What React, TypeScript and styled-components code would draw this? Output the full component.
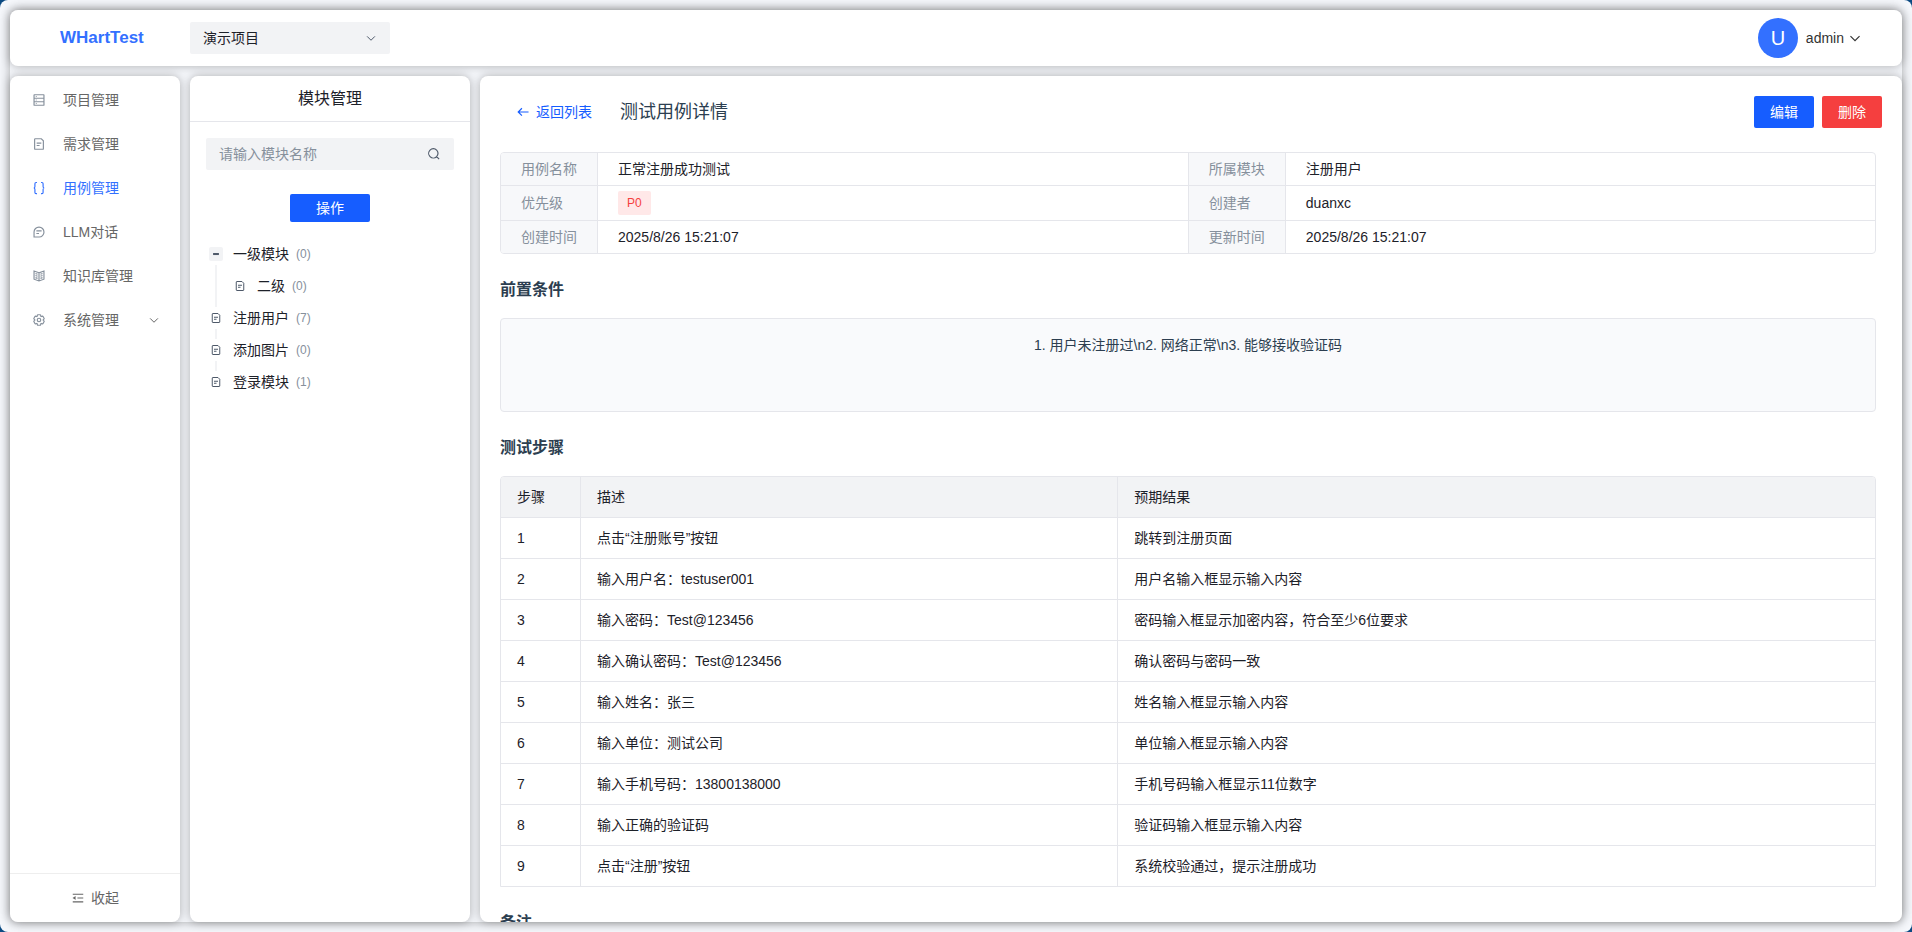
import React, { useState } from 'react';
import styled, { createGlobalStyle, css } from 'styled-components';

const GlobalStyle = createGlobalStyle`
  *, *::before, *::after { box-sizing: border-box; }
  body {
    margin: 0;
    background: #0b4a82;
    font-family: 'Liberation Sans', 'Noto Sans CJK SC', sans-serif;
    font-size: 14px;
    line-height: 22px;
    color: #1d2129;
  }
  button, input, select { font: inherit; color: inherit; }
  h1, h2, h3, p, ul { margin: 0; padding: 0; }
  ul { list-style: none; }
`;

/* ---------- icons ---------- */

const paths = {
  storage:
    'M7 18h34v12H7V18ZM40 6H8a1 1 0 0 0-1 1v11h34V7a1 1 0 0 0-1-1ZM7 30h34v11a1 1 0 0 1-1 1H8a1 1 0 0 1-1-1V30ZM13 12h3M13 24h3M13 36h3',
  file: 'M16 21h16m-16 8h10m11 13H11a2 2 0 0 1-2-2V8a2 2 0 0 1 2-2h21l7 7v27a2 2 0 0 1-2 2Z',
  braces:
    'M17 5h-3a4 4 0 0 0-4 4v10c0 2-2 5-4 5 2 0 4 3 4 5v10a4 4 0 0 0 4 4h3M31 5h3a4 4 0 0 1 4 4v10c0 2 2 5 4 5-2 0-4 3-4 5v10a4 4 0 0 1-4 4h-3',
  message: 'M15 20h18m-18 9h9M7 41h17.63C33.67 41 41 33.67 41 24.63V24c0-9.389-7.611-17-17-17S7 14.611 7 24v17Z',
  book: 'M24 13 7 7v28l17 6 17-6V7l-17 6Zm0 0v27.5M29 18l7-2.5M29 25l7-2.5M29 32l7-2.5M19 18l-7-2.5m7 9.5-7-2.5m7 9.5-7-2.5',
  settings:
    'M18.797 6.732A1 1 0 0 1 19.76 6h8.48a1 1 0 0 1 .964.732l1.285 4.628a1 1 0 0 0 1.213.7l4.651-1.2a1 1 0 0 1 1.116.468l4.24 7.344a1 1 0 0 1-.153 1.2L38.193 23.3a1 1 0 0 0 0 1.402l3.364 3.427a1 1 0 0 1 .153 1.2l-4.24 7.344a1 1 0 0 1-1.116.468l-4.65-1.2a1 1 0 0 0-1.214.7l-1.285 4.628a1 1 0 0 1-.964.732h-8.48a1 1 0 0 1-.963-.732L17.51 36.64a1 1 0 0 0-1.213-.7l-4.65 1.2a1 1 0 0 1-1.116-.468l-4.24-7.344a1 1 0 0 1 .153-1.2L9.809 24.7a1 1 0 0 0 0-1.402l-3.364-3.427a1 1 0 0 1-.153-1.2l4.24-7.344a1 1 0 0 1 1.116-.468l4.65 1.2a1 1 0 0 0 1.213-.7l1.286-4.628ZM30 24a6 6 0 1 1-12 0 6 6 0 0 1 12 0Z',
  down: 'M39.6 17.443 24.043 33 8.487 17.443',
  search:
    'M33.072 33.071c6.248-6.248 6.248-16.379 0-22.627-6.249-6.249-16.38-6.249-22.628 0-6.248 6.248-6.248 16.379 0 22.627 6.248 6.248 16.38 6.248 22.628 0Zm0 0 8.485 8.485',
  arrowLeft: 'M20.272 11.27 7.544 23.998l12.728 12.728M43 24H8.705',
  menuFold: 'M42 11H6M42 24H22M42 37H6M13.66 26.912l-4.82-3.118 4.82-3.118v6.236Z',
  minus: 'M10 24h28',
};

type IconName = keyof typeof paths;

const IconSvg = styled.svg`
  flex: none;
  display: block;
  fill: none;
  stroke: currentColor;
`;

function Icon({ name, size = 14, stroke = 4 }: { name: IconName; size?: number; stroke?: number }) {
  return (
    <IconSvg viewBox="0 0 48 48" width={size} height={size} strokeWidth={stroke} aria-hidden="true">
      <path d={paths[name]} />
    </IconSvg>
  );
}

/* ---------- page frame ---------- */

const Frame = styled.div`
  display: flex;
  height: 100vh;
  padding: 10px;
  border-radius: 8px;
  background: #f5f7fb;
  overflow: hidden;
`;

const Stage = styled.div`
  display: flex;
  flex-direction: column;
  flex: 1;
  gap: 10px;
  min-width: 0;
  border-radius: 8px;
  background: #f5f7fb;
  box-shadow: 0 0 12px rgba(0, 0, 0, 0.3);
`;

const panel = css`
  background: #fff;
  border-radius: 8px;
  box-shadow: 0 0 10px rgba(0, 0, 0, 0.3);
`;

const Columns = styled.div`
  display: flex;
  gap: 10px;
  flex: 1;
  min-height: 0;
`;

/* ---------- top bar ---------- */

const TopBar = styled.header`
  ${panel}
  display: flex;
  align-items: center;
  flex: none;
  height: 56px;
  padding: 0 40px 0 50px;
`;

const Brand = styled.a`
  width: 130px;
  font-size: 17px;
  font-weight: 700;
  color: #3370ff;
  text-decoration: none;
`;

const SelectBox = styled.div`
  display: grid;
  align-items: center;
  width: 200px;
  color: #4e5969;
  > * { grid-area: 1 / 1; }
  > svg { justify-self: end; margin-right: 13px; pointer-events: none; }
`;

const Select = styled.select`
  appearance: none;
  width: 100%;
  height: 32px;
  padding: 0 32px 0 13px;
  border: 0;
  border-radius: 2px;
  background: #f2f3f5;
  color: #1d2129;
`;

const UserButton = styled.button`
  display: flex;
  align-items: center;
  gap: 8px;
  margin-left: auto;
  padding: 0;
  border: 0;
  background: none;
  color: #333;
  cursor: pointer;
`;

const UserName = styled.span`
  display: flex;
  align-items: center;
  gap: 4px;
`;

const Avatar = styled.span`
  display: grid;
  place-items: center;
  width: 40px;
  height: 40px;
  border-radius: 50%;
  background: #3370ff;
  color: #fff;
  font-size: 20px;
`;

/* ---------- side navigation ---------- */

const Sidebar = styled.aside`
  ${panel}
  display: flex;
  flex-direction: column;
  flex: none;
  width: 170px;
`;

const Nav = styled.nav`
  flex: 1;
  padding-top: 4px;
`;

const NavLink = styled.a<{ $active?: boolean }>`
  display: flex;
  align-items: center;
  gap: 17px;
  height: 40px;
  margin-bottom: 4px;
  padding: 0 20px 0 22px;
  color: ${(p) => (p.$active ? '#3370ff' : '#666')};
  text-decoration: none;
  > svg:first-child { color: ${(p) => (p.$active ? '#3370ff' : '#86909c')}; }
  > svg:last-child:not(:first-child) { margin-left: auto; }
`;

const CollapseButton = styled.button`
  display: flex;
  align-items: center;
  justify-content: center;
  gap: 6px;
  height: 49px;
  border: 0;
  border-top: 1px solid #eee;
  background: none;
  color: #666;
  cursor: pointer;
`;

/* ---------- module panel ---------- */

const ModulePanel = styled.section`
  ${panel}
  display: flex;
  flex-direction: column;
  flex: none;
  width: 280px;
`;

const ModuleTitle = styled.h2`
  height: 46px;
  border-bottom: 1px solid #e5e6eb;
  font-size: 16px;
  font-weight: 400;
  line-height: 46px;
  text-align: center;
`;

const ModuleBody = styled.div`
  display: flex;
  flex-direction: column;
  padding: 16px;
`;

const SearchBox = styled.label`
  display: flex;
  align-items: center;
  height: 32px;
  padding: 0 13px;
  border-radius: 2px;
  background: #f2f3f5;
  color: #4e5969;
`;

const SearchInput = styled.input`
  flex: 1;
  min-width: 0;
  padding: 0;
  border: 0;
  outline: 0;
  background: none;
  &::placeholder { color: #86909c; opacity: 1; }
`;

const Button = styled.button<{ $danger?: boolean; $small?: boolean }>`
  height: ${(p) => (p.$small ? 28 : 32)}px;
  padding: 0 16px;
  border: 0;
  border-radius: 2px;
  background: ${(p) => (p.$danger ? '#f53f3f' : '#165dff')};
  color: #fff;
  cursor: pointer;
`;

const ActionButton = styled(Button)`
  align-self: center;
  width: 80px;
  margin: 24px 0 16px;
`;

const Tree = styled.ul`
  padding-left: 3px;
`;

const TreeItem = styled.li`
  position: relative;
  &:not(:last-child)::before {
    content: '';
    position: absolute;
    top: 27px;
    bottom: -5px;
    left: 6px;
    width: 2px;
    background: #f2f3f5;
  }
`;

const SubTree = styled.ul`
  padding-left: 24px;
`;

const TreeRow = styled.div`
  display: flex;
  align-items: center;
  height: 32px;
`;

const TreeSwitch = styled.button`
  display: grid;
  place-items: center;
  width: 14px;
  height: 14px;
  padding: 0;
  border: 0;
  border-radius: 2px;
  background: #f2f3f5;
  color: #4e5969;
`;

const TreeIcon = styled.span`
  display: grid;
  place-items: center;
  width: 14px;
  color: #4e5969;
`;

const TreeLabel = styled.span`
  margin: 0 7px 0 10px;
`;

const Count = styled.span`
  font-size: 12px;
  line-height: 24px;
  color: #86909c;
`;

/* ---------- detail ---------- */

const Detail = styled.main`
  ${panel}
  display: flex;
  flex-direction: column;
  flex: 1;
  min-width: 0;
  padding: 20px 20px 0;
  overflow: hidden;
`;

const DetailHead = styled.div`
  display: flex;
  align-items: center;
  flex: none;
  gap: 8px;
  margin-bottom: 24px;
`;

const BackButton = styled.button`
  display: flex;
  align-items: center;
  gap: 6px;
  height: 32px;
  padding: 0 16px;
  border: 0;
  background: none;
  color: #165dff;
  cursor: pointer;
`;

const DetailTitle = styled.h1`
  flex: 1;
  margin-left: 4px;
  font-size: 18px;
  font-weight: 400;
  color: #2c3e50;
`;

const Scroller = styled.div`
  flex: 1;
  min-height: 0;
  padding-right: 6px;
  overflow-y: auto;
  scrollbar-width: none;
`;

const tableFrame = css`
  width: 100%;
  table-layout: fixed;
  border-spacing: 0;
  border: 1px solid #e5e6eb;
  th, td {
    text-align: left;
    font-weight: 400;
    border-right: 1px solid #e5e6eb;
    border-bottom: 1px solid #e5e6eb;
  }
  tr > :last-child { border-right: 0; }
  tbody tr:last-child > * { border-bottom: 0; }
`;

const InfoTable = styled.table`
  ${tableFrame}
  border-radius: 4px;
  overflow: hidden;
  th, td { padding: 5px 20px; }
  th { width: 97px; background: #f7f8fa; color: #86909c; }
  td:nth-child(2) { width: 43%; }
`;

const Tag = styled.span`
  display: inline-block;
  height: 24px;
  padding: 0 9px;
  border-radius: 2px;
  background: #ffe8e8;
  color: #f53f3f;
  font-size: 12px;
  line-height: 24px;
  vertical-align: top;
`;

const SectionTitle = styled.h3`
  margin: 24px 0 16px;
  font-size: 16px;
  font-weight: 700;
  line-height: 24px;
  color: #2c3e50;
`;

const NoteBox = styled.div`
  min-height: 94px;
  padding: 15px 16px;
  border: 1px solid #e5e6eb;
  border-radius: 4px;
  background: #f9fafc;
  color: #2c3e50;
  text-align: center;
`;

const StepTable = styled.table`
  ${tableFrame}
  border-radius: 4px 4px 0 0;
  overflow: hidden;
  th, td { padding: 9px 16px; }
  th { background: #f2f3f5; }
  th:first-child { width: 80px; }
  th:nth-child(2) { width: 39.1%; }
`;

/* ---------- data ---------- */

const navItems: { icon: IconName; label: string; active?: boolean; more?: boolean }[] = [
  { icon: 'storage', label: '项目管理' },
  { icon: 'file', label: '需求管理' },
  { icon: 'braces', label: '用例管理', active: true },
  { icon: 'message', label: 'LLM对话' },
  { icon: 'book', label: '知识库管理' },
  { icon: 'settings', label: '系统管理', more: true },
];

const modules: { name: string; count: number; children?: { name: string; count: number }[] }[] = [
  { name: '一级模块', count: 0, children: [{ name: '二级', count: 0 }] },
  { name: '注册用户', count: 7 },
  { name: '添加图片', count: 0 },
  { name: '登录模块', count: 1 },
];

const steps = [
  ['点击“注册账号”按钮', '跳转到注册页面'],
  ['输入用户名：testuser001', '用户名输入框显示输入内容'],
  ['输入密码：Test@123456', '密码输入框显示加密内容，符合至少6位要求'],
  ['输入确认密码：Test@123456', '确认密码与密码一致'],
  ['输入姓名：张三', '姓名输入框显示输入内容'],
  ['输入单位：测试公司', '单位输入框显示输入内容'],
  ['输入手机号码：13800138000', '手机号码输入框显示11位数字'],
  ['输入正确的验证码', '验证码输入框显示输入内容'],
  ['点击“注册”按钮', '系统校验通过，提示注册成功'],
];

export default function App() {
  const [query, setQuery] = useState('');
  const [open, setOpen] = useState(true);

  return (
    <>
      <GlobalStyle />
      <Frame>
        <Stage>
          <TopBar>
            <Brand href="#">WHartTest</Brand>
            <SelectBox>
              <Select aria-label="项目">
                <option>演示项目</option>
              </Select>
              <Icon name="down" size={12} />
            </SelectBox>
            <UserButton type="button">
              <Avatar>U</Avatar>
              <UserName>
                admin
                <Icon name="down" />
              </UserName>
            </UserButton>
          </TopBar>

          <Columns>
            <Sidebar>
              <Nav>
                {navItems.map((item) => (
                  <NavLink key={item.label} href="#" $active={item.active}>
                    <Icon name={item.icon} />
                    <span>{item.label}</span>
                    {item.more && <Icon name="down" size={12} />}
                  </NavLink>
                ))}
              </Nav>
              <CollapseButton type="button">
                <Icon name="menuFold" />
                收起
              </CollapseButton>
            </Sidebar>

            <ModulePanel>
              <ModuleTitle>模块管理</ModuleTitle>
              <ModuleBody>
                <SearchBox>
                  <SearchInput
                    aria-label="模块名称"
                    placeholder="请输入模块名称"
                    value={query}
                    onChange={(e) => setQuery(e.target.value)}
                  />
                  <Icon name="search" />
                </SearchBox>
                <ActionButton type="button" $small>
                  操作
                </ActionButton>
                <Tree>
                  {modules.map((m) => (
                    <TreeItem key={m.name}>
                      <TreeRow>
                        {m.children ? (
                          <TreeSwitch type="button" aria-label="展开或收起" onClick={() => setOpen(!open)}>
                            <Icon name="minus" size={10} stroke={10} />
                          </TreeSwitch>
                        ) : (
                          <TreeIcon>
                            <Icon name="file" size={12} />
                          </TreeIcon>
                        )}
                        <TreeLabel>{m.name}</TreeLabel>
                        <Count>({m.count})</Count>
                      </TreeRow>
                      {m.children && open && (
                        <SubTree>
                          {m.children.map((c) => (
                            <TreeItem key={c.name}>
                              <TreeRow>
                                <TreeIcon>
                                  <Icon name="file" size={12} />
                                </TreeIcon>
                                <TreeLabel>{c.name}</TreeLabel>
                                <Count>({c.count})</Count>
                              </TreeRow>
                            </TreeItem>
                          ))}
                        </SubTree>
                      )}
                    </TreeItem>
                  ))}
                </Tree>
              </ModuleBody>
            </ModulePanel>

            <Detail>
              <DetailHead>
                <BackButton type="button">
                  <Icon name="arrowLeft" />
                  返回列表
                </BackButton>
                <DetailTitle>测试用例详情</DetailTitle>
                <Button type="button">编辑</Button>
                <Button type="button" $danger>
                  删除
                </Button>
              </DetailHead>
              <Scroller>
                <InfoTable>
                  <tbody>
                    <tr>
                      <th scope="row">用例名称</th>
                      <td>正常注册成功测试</td>
                      <th scope="row">所属模块</th>
                      <td>注册用户</td>
                    </tr>
                    <tr>
                      <th scope="row">优先级</th>
                      <td>
                        <Tag>P0</Tag>
                      </td>
                      <th scope="row">创建者</th>
                      <td>duanxc</td>
                    </tr>
                    <tr>
                      <th scope="row">创建时间</th>
                      <td>2025/8/26 15:21:07</td>
                      <th scope="row">更新时间</th>
                      <td>2025/8/26 15:21:07</td>
                    </tr>
                  </tbody>
                </InfoTable>

                <SectionTitle>前置条件</SectionTitle>
                <NoteBox>{'1. 用户未注册过\\n2. 网络正常\\n3. 能够接收验证码'}</NoteBox>

                <SectionTitle>测试步骤</SectionTitle>
                <StepTable>
                  <thead>
                    <tr>
                      <th scope="col">步骤</th>
                      <th scope="col">描述</th>
                      <th scope="col">预期结果</th>
                    </tr>
                  </thead>
                  <tbody>
                    {steps.map(([action, expected], i) => (
                      <tr key={action}>
                        <td>{i + 1}</td>
                        <td>{action}</td>
                        <td>{expected}</td>
                      </tr>
                    ))}
                  </tbody>
                </StepTable>

                <SectionTitle>备注</SectionTitle>
              </Scroller>
            </Detail>
          </Columns>
        </Stage>
      </Frame>
    </>
  );
}
